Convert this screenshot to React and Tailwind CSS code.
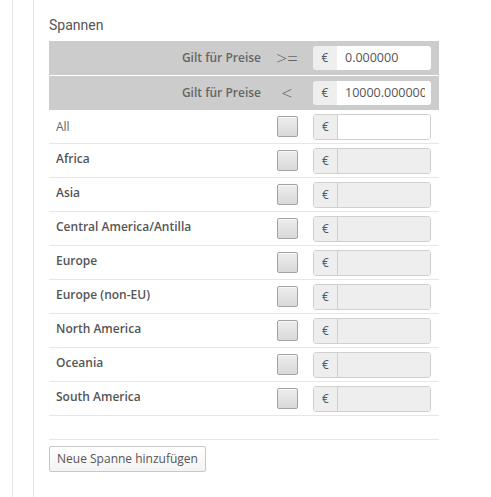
import React from "react";

const regions = [
  "Africa",
  "Asia",
  "Central America/Antilla",
  "Europe",
  "Europe (non-EU)",
  "North America",
  "Oceania",
  "South America",
];

function Checkbox() {
  return (
    <div className="w-[21px] h-[21px] rounded-[2px] border border-[#a3a3a3] bg-gradient-to-b from-[#ededed] to-[#d9d9d9] shadow-[inset_0_1px_0_#f8f8f8]" />
  );
}

function MoneyInput({ disabled, value, header }) {
  return (
    <div
      className={
        "flex w-[118px] rounded-[3px] overflow-hidden " +
        (header ? "h-[24px]" : "h-[26px] border border-[#cfcfcf]")
      }
    >
      <div
        className={
          "w-[24px] shrink-0 flex items-center justify-center bg-[#eeeeee] text-[12px] text-[#555]" +
          (header ? "" : " border-r border-[#cfcfcf]")
        }
      >
        €
      </div>
      <input
        readOnly
        value={value || ""}
        className={
          "min-w-0 flex-1 pl-[8px] pr-[6px] text-[12.5px] text-[#555] outline-none " +
          (disabled ? "bg-[#eeeeee]" : "bg-white")
        }
        style={{ fontFamily: "'Open Sans', sans-serif" }}
      />
    </div>
  );
}

export default function App() {
  return (
    <div
      className="min-h-[497px] bg-white"
      style={{ fontFamily: "'Open Sans', sans-serif" }}
    >
      <div className="ml-[12px] min-h-[497px] border-l border-[#e3e3e3]">
        <div className="ml-[20px] min-h-[497px] border-l border-[#e3e3e3] pl-[15px] pt-[15px]">
          <div
            className="text-[14px] leading-[20px] text-[#555]"
            style={{ fontFamily: "Roboto, sans-serif" }}
          >
            Spannen
          </div>
          <div className="mt-[6px] w-[390px]">
            {/* header rows */}
            <div className="flex h-[34px] items-center bg-[#cccccc]">
              <div className="w-[220px] pr-[8px] text-right text-[12px] font-semibold text-[#666]">
                Gilt für Preise
              </div>
              <div className="w-[36px] text-center text-[19px] font-light text-[#666] leading-none">
                &gt;=
              </div>
              <div className="ml-[8px]">
                <MoneyInput header value="0.000000" />
              </div>
            </div>
            <div className="h-px bg-white" />
            <div className="flex h-[34px] items-center bg-[#cccccc]">
              <div className="w-[220px] pr-[8px] text-right text-[12px] font-semibold text-[#666]">
                Gilt für Preise
              </div>
              <div className="w-[36px] text-center text-[19px] font-light text-[#666] leading-none">
                &lt;
              </div>
              <div className="ml-[8px]">
                <MoneyInput header value="10000.000000" />
              </div>
            </div>

            {/* All row */}
            <div className="flex h-[34px] items-center border-b border-[#e6e6e6]">
              <div className="w-[220px] pl-[7px] text-[12px] text-[#666]">
                All
              </div>
              <div className="w-[36px] flex justify-center">
                <Checkbox />
              </div>
              <div className="ml-[8px]">
                <MoneyInput />
              </div>
            </div>

            {regions.map((r) => (
              <div
                key={r}
                className="flex h-[34px] items-center border-b border-[#e6e6e6]"
              >
                <div className="w-[220px] pl-[7px] pb-[4px] text-[12px] font-semibold text-[#555]">
                  {r}
                </div>
                <div className="w-[36px] flex justify-center">
                  <Checkbox />
                </div>
                <div className="ml-[8px]">
                  <MoneyInput disabled />
                </div>
              </div>
            ))}

            <div className="mt-[23px] border-t border-[#e6e6e6] pt-[5px]">
              <button className="h-[26px] w-[157px] rounded-[2px] border border-[#c8c8c8] bg-gradient-to-b from-white to-[#f3f3f3] text-[12px] text-[#555]">
                Neue Spanne hinzufügen
              </button>
            </div>
          </div>
        </div>
      </div>
    </div>
  );
}
